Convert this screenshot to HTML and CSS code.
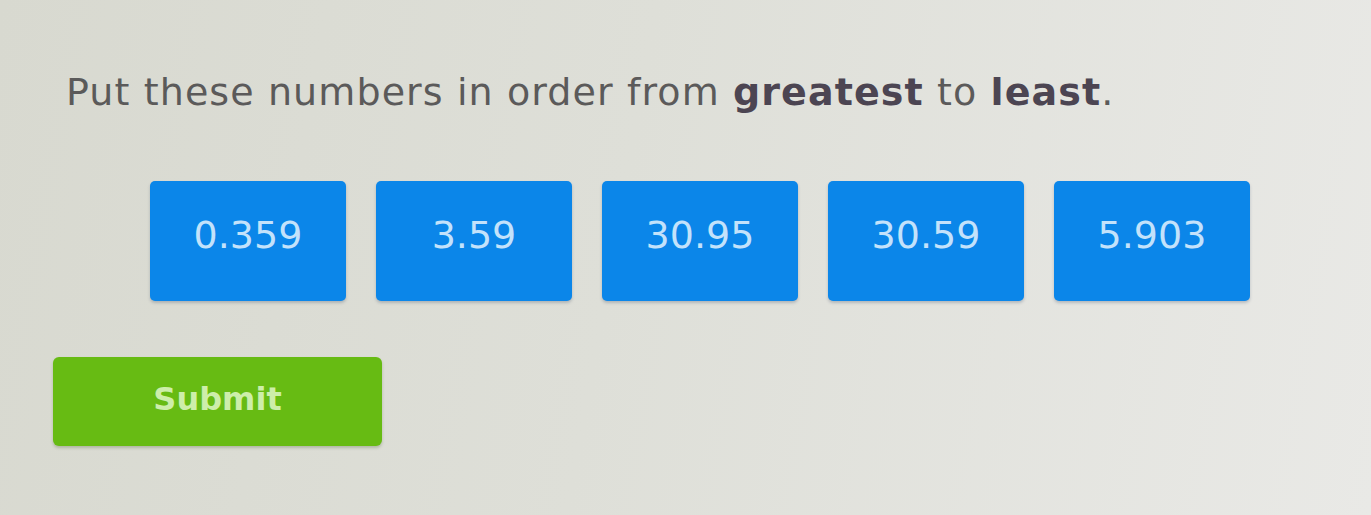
FILE: index.html
```html
<!DOCTYPE html>
<html>
<head>
<meta charset="utf-8">
<link rel="stylesheet" href="styles.css">
</head>
<body>
<main class="page">
  <p class="prompt">Put these numbers in order from <b>greatest</b> to <b>least</b>.</p>
  <div class="tiles">
    <div class="tile">0.359</div>
    <div class="tile">3.59</div>
    <div class="tile">30.95</div>
    <div class="tile">30.59</div>
    <div class="tile">5.903</div>
  </div>
  <button class="submit">Submit</button>
</main>
</body>
</html>
```

FILE: styles.css
```css
html, body {
  margin: 0;
  height: 100%;
}
body {
  background: linear-gradient(100deg, #d8d9d0 0%, #dedfd8 45%, #e9e9e6 100%);
  font-family: "DejaVu Sans", Verdana, sans-serif;
  overflow: hidden;
}
.page {
  display: flex;
  flex-direction: column;
  padding: 70px 0 0 66px;
}
.prompt {
  margin: 0;
  font-size: 38px;
  color: #5b5a5a;
  letter-spacing: 1.1px;
}
.prompt b {
  color: #4c4552;
  font-weight: bold;
}
.tiles {
  display: flex;
  gap: 30px;
  margin: 67px 0 0 84px;
}
.tile {
  width: 196px;
  height: 120px;
  border-radius: 5px;
  background: #0b86e9;
  color: #c3e2fb;
  font-size: 38px;
  display: flex;
  align-items: center;
  justify-content: center;
  padding-bottom: 12px;
  box-sizing: border-box;
  box-shadow: 0 2px 3px rgba(40, 60, 90, 0.25);
}
.submit {
  align-self: flex-start;
  margin: 56px 0 0 -13px;
  width: 329px;
  height: 89px;
  border: none;
  border-radius: 6px;
  background: #67bb13;
  color: #cdeeaa;
  font-family: "DejaVu Sans", Verdana, sans-serif;
  font-size: 32px;
  font-weight: bold;
  padding: 0 0 6px 0;
  box-shadow: 0 2px 3px rgba(50, 80, 20, 0.25);
}
```
